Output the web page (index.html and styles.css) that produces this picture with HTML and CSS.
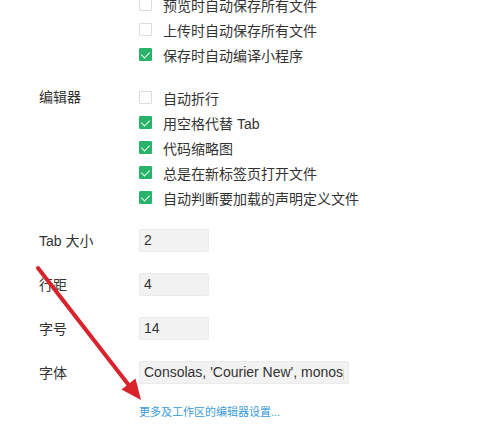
FILE: index.html
```html
<!DOCTYPE html>
<html lang="zh-CN">
<head>
    <meta charset="UTF-8">
    <title>设置 - 编辑器</title>
    <link rel="stylesheet" href="styles.css">
</head>
<body>
    <main class="settings">
        <!-- 文件保存 -->
        <section class="group">
            <div class="group-label"></div>
            <div class="options">
                <label class="check-row"><span class="box"></span>预览时自动保存所有文件</label>
                <label class="check-row"><span class="box"></span>上传时自动保存所有文件</label>
                <label class="check-row"><span class="box checked"></span>保存时自动编译小程序</label>
            </div>
        </section>

        <!-- 编辑器 -->
        <section class="group">
            <div class="group-label">编辑器</div>
            <div class="options">
                <label class="check-row"><span class="box"></span>自动折行</label>
                <label class="check-row"><span class="box checked"></span>用空格代替 Tab</label>
                <label class="check-row"><span class="box checked"></span>代码缩略图</label>
                <label class="check-row"><span class="box checked"></span>总是在新标签页打开文件</label>
                <label class="check-row"><span class="box checked"></span>自动判断要加载的声明定义文件</label>
            </div>
        </section>

        <section class="fields">
            <div class="field-row">
                <span class="field-label">Tab 大小</span>
                <input class="field small" type="text" value="2">
            </div>
            <div class="field-row">
                <span class="field-label">行距</span>
                <input class="field small" type="text" value="4">
            </div>
            <div class="field-row">
                <span class="field-label">字号</span>
                <input class="field small" type="text" value="14">
            </div>
            <div class="field-row">
                <span class="field-label">字体</span>
                <input class="field wide" type="text" value="Consolas, 'Courier New', monospace">
            </div>
        </section>

        <a class="more-link" href="#">更多及工作区的编辑器设置...</a>

        <!-- 标注箭头 -->
        <svg class="arrow" width="500" height="436" viewBox="0 0 500 436">
            <line x1="38" y1="268" x2="131" y2="388" stroke="#d8232b" stroke-width="4" stroke-linecap="round"/>
            <polygon points="141,400 135.5,378.5 121.5,389.5" fill="#d8232b"/>
        </svg>
    </main>
</body>
</html>
```

FILE: styles.css
```css
body {
    margin: 0;
    background: #fff;
    color: #333;
    font-family: "Liberation Sans", "Noto Sans CJK SC", sans-serif;
    font-size: 14px;
    overflow: hidden;
}
.settings {
    position: relative;
    margin-top: -8px;
    padding-left: 39px;
    height: 444px;
}
.group {
    display: grid;
    grid-template-columns: 100px 1fr;
}
.group + .group {
    margin-top: 18px;
}
.group-label {
    line-height: 25px;
}
.options {
    display: flex;
    flex-direction: column;
}
.check-row {
    display: flex;
    align-items: center;
    gap: 11px;
    height: 25px;
}
.box {
    box-sizing: border-box;
    width: 13px;
    height: 13px;
    border: 1px solid #dcdcdc;
    border-radius: 1px;
    background: #fff;
    position: relative;
}
.box.checked {
    background: #27b36a;
    border-color: #27b36a;
}
.box.checked::after {
    content: "";
    position: absolute;
    left: 3px;
    top: 1px;
    width: 4px;
    height: 7px;
    border: solid #fff;
    border-width: 0 1.5px 1.5px 0;
    transform: rotate(45deg);
}
.fields {
    margin-top: 8px;
    display: flex;
    flex-direction: column;
}
.field-row {
    display: grid;
    grid-template-columns: 100px auto;
    align-items: center;
    justify-items: start;
    height: 44px;
}
.field {
    box-sizing: border-box;
    height: 23px;
    padding: 0 4px;
    border: 1px solid #ebebeb;
    border-radius: 2px;
    background: #f2f2f2;
    color: #333;
    font-family: "Liberation Sans", sans-serif;
    font-size: 14px;
    outline: none;
}
.field.small {
    width: 70px;
}
.field.wide {
    width: 210px;
}
.more-link {
    display: block;
    margin: 10px 0 0 100px;
    line-height: 16px;
    font-size: 11px;
    color: #3a9bd9;
    text-decoration: none;
}
.arrow {
    position: absolute;
    left: 0;
    top: 8px;
    pointer-events: none;
}
```
